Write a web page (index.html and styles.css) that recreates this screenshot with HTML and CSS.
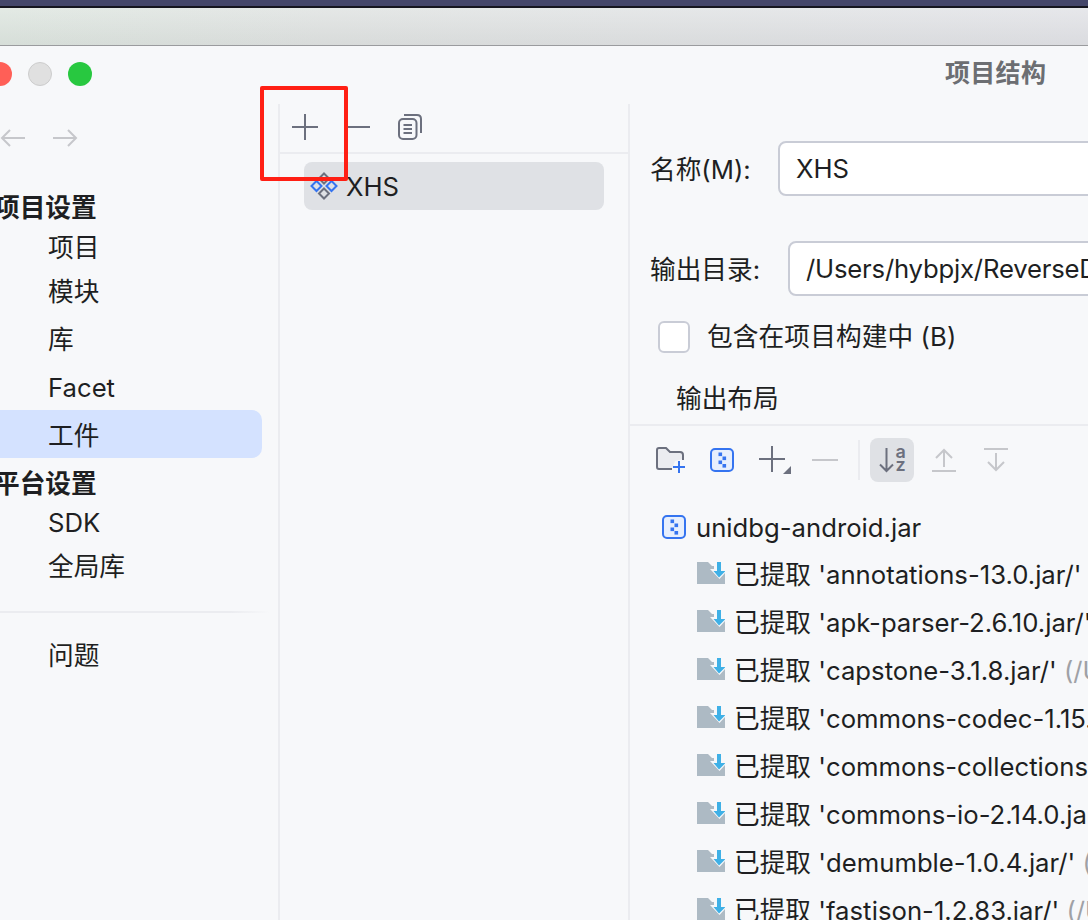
FILE: index.html
```html
<!DOCTYPE html>
<html lang="zh">
<head>
<meta charset="utf-8">
<title>项目结构</title>
<link rel="stylesheet" href="styles.css">
</head>
<body>
<svg class="defs" width="0" height="0" aria-hidden="true">
  <symbol id="jar" viewBox="0 0 24 24">
    <rect x="1" y="1" width="22" height="22" rx="4" fill="#e7effd" stroke="#3574f0" stroke-width="2"/>
    <rect x="8.500" y="4.500" width="3.600" height="3.600" fill="#3574f0"/>
    <rect x="12.500" y="8.500" width="3.600" height="3.600" fill="#3574f0"/>
    <rect x="8.500" y="12.500" width="3.600" height="3.600" fill="#3574f0"/>
    <rect x="12.500" y="16" width="3.600" height="3.600" fill="#3574f0"/>
  </symbol>
  <symbol id="extracted" viewBox="0 0 28 22">
    <path d="M0 0H11L15 4H28V22H0Z" fill="#adbac4"/>
    <path d="M13 7L22.500 17L28 11V0H17V7Z" fill="#f7f8fa"/>
    <path d="M20 0H24V9H28V9.500L22 15.500L16.500 9H20Z" fill="#3fb0e6"/>
  </symbol>
</svg>
<div class="desktop-bar"></div>
<div class="backdrop"></div>
<div class="window">
  <header class="titlebar">
    <div class="lights">
      <span class="light red"></span>
      <span class="light grey"></span>
      <span class="light green"></span>
    </div>
    <h1 class="title">项目结构</h1>
  </header>
  <div class="main">
    <aside class="sidebar">
      <div class="nav-arrows">
        <svg width="26" height="24" viewBox="0 0 26 24"><path d="M25 12H2M10 4L2 12L10 20" fill="none" stroke="#c6c7cb" stroke-width="2"/></svg>
        <svg width="26" height="24" viewBox="0 0 26 24"><path d="M1 12H24M16 4L24 12L16 20" fill="none" stroke="#c6c7cb" stroke-width="2"/></svg>
      </div>
      <div class="nav-head">项目设置</div>
      <div class="nav-item first">项目</div>
      <div class="nav-item">模块</div>
      <div class="nav-item">库</div>
      <div class="nav-item">Facet</div>
      <div class="nav-item active">工件</div>
      <div class="nav-head second">平台设置</div>
      <div class="nav-item first">SDK</div>
      <div class="nav-item">全局库</div>
      <div class="nav-sep"></div>
      <div class="nav-item">问题</div>
    </aside>
    <section class="list-pane">
      <div class="list-toolbar">
        <svg width="28" height="28" viewBox="0 0 28 28"><path d="M14 1V27M1 14H27" stroke="#6c707e" stroke-width="2"/></svg>
        <svg width="26" height="28" viewBox="0 0 26 28"><path d="M1 14H25" stroke="#6c707e" stroke-width="2"/></svg>
        <svg class="copy-icon" width="24" height="26" viewBox="0 0 24 26"><rect x="1" y="5" width="17.500" height="20" rx="4" fill="none" stroke="#6c707e" stroke-width="2"/><path d="M6 1H19Q23 1 23 5V19" fill="none" stroke="#6c707e" stroke-width="2"/><path d="M5.500 11H14M5.500 15H14M5.500 19H14" stroke="#6c707e" stroke-width="2"/></svg>
      </div>
      <div class="artifact-row">
        <svg width="28" height="28" viewBox="0 0 28 28" fill="none" stroke-width="2">
          <path d="M14 1.500L19 6.500L14 11.500L9 6.500Z" stroke="#6c707e"/>
          <path d="M14 16.500L19 21.500L14 26.500L9 21.500Z" stroke="#6c707e"/>
          <path d="M6.500 9L11.500 14L6.500 19L1.500 14Z" stroke="#3574f0"/>
          <path d="M21.500 9L26.500 14L21.500 19L16.500 14Z" stroke="#3574f0"/>
        </svg>
        <span>XHS</span>
      </div>
    </section>
    <section class="detail-pane">
      <div class="field name-field">
        <label class="field-label">名称(M):</label>
        <div class="text-box">XHS</div>
      </div>
      <div class="field dir-field">
        <label class="field-label">输出目录:</label>
        <div class="text-box path-box">/Users/hybpjx/ReverseDemo/out/artifacts/XHS</div>
      </div>
      <div class="check-row">
        <span class="checkbox"></span>
        <span class="check-label">包含在项目构建中 (B)</span>
      </div>
      <div class="layout-title">输出布局</div>
      <div class="layout-toolbar">
        <svg class="t-folder" width="30" height="26" viewBox="0 0 30 26"><path d="M1 20V3Q1 1 3 1H10L14 5H24Q27 5 27 8V12L19 14L16 22H3Q1 22 1 20Z" fill="#ebecf0"/><path d="M16 22H3Q1 22 1 20V3Q1 1 3 1H10L14 5H24Q27 5 27 8V13" fill="none" stroke="#6c707e" stroke-width="2"/><path d="M23 14V26M17 20H29" stroke="#3574f0" stroke-width="2"/></svg>
        <svg class="t-jar" width="24" height="24"><use href="#jar"/></svg>
        <svg class="t-plus" width="34" height="30" viewBox="0 0 34 30"><path d="M13 1V27M0 14H26" stroke="#6c707e" stroke-width="2"/><path d="M32 21V29H24Z" fill="#6c707e"/></svg>
        <svg class="t-minus" width="26" height="28" viewBox="0 0 26 28"><path d="M0 14H26" stroke="#c6c7cb" stroke-width="2"/></svg>
        <span class="t-sep"></span>
        <span class="t-sort">
          <svg width="32" height="30" viewBox="0 0 32 30"><path d="M10.500 3V26M4 19.500L10.500 26L17 19.500" fill="none" stroke="#6c707e" stroke-width="2"/><text class="sort-letter" x="19.500" y="13">a</text><text class="sort-letter" x="19.500" y="26">z</text></svg>
        </span>
        <svg class="t-up" width="24" height="24" viewBox="0 0 24 24"><path d="M12 19V2M4 10L12 2L20 10M0 23H24" fill="none" stroke="#c6c7cb" stroke-width="2"/></svg>
        <svg class="t-down" width="24" height="24" viewBox="0 0 24 24"><path d="M0 1H24M12 5V22M4 14L12 22L20 14" fill="none" stroke="#c6c7cb" stroke-width="2"/></svg>
      </div>
      <div class="tree">
        <div class="tree-root"><svg width="24" height="24"><use href="#jar"/></svg><span>unidbg-android.jar</span></div>
        <div class="tree-row"><svg width="28" height="22"><use href="#extracted"/></svg><span>已提取 'annotations-13.0.jar/' <em>(/Users/hybpjx/.m2)</em></span></div>
        <div class="tree-row"><svg width="28" height="22"><use href="#extracted"/></svg><span>已提取 'apk-parser-2.6.10.jar/' <em>(/Users/hybpjx/.m2)</em></span></div>
        <div class="tree-row"><svg width="28" height="22"><use href="#extracted"/></svg><span>已提取 'capstone-3.1.8.jar/' <em>(/Users/hybpjx/.m2)</em></span></div>
        <div class="tree-row"><svg width="28" height="22"><use href="#extracted"/></svg><span>已提取 'commons-codec-1.15.jar/' <em>(/Users)</em></span></div>
        <div class="tree-row"><svg width="28" height="22"><use href="#extracted"/></svg><span>已提取 'commons-collections-3.2.2.jar/'</span></div>
        <div class="tree-row"><svg width="28" height="22"><use href="#extracted"/></svg><span>已提取 'commons-io-2.14.0.jar/' <em>(/Users)</em></span></div>
        <div class="tree-row"><svg width="28" height="22"><use href="#extracted"/></svg><span>已提取 'demumble-1.0.4.jar/' <em>(/Users/hybpjx)</em></span></div>
        <div class="tree-row"><svg width="28" height="22"><use href="#extracted"/></svg><span>已提取 'fastjson-1.2.83.jar/' <em>(/Users/hybpjx)</em></span></div>
      </div>
    </section>
  </div>
</div>
<div class="callout"></div>
</body>
</html>
```
FILE: styles.css
```css
* { box-sizing: border-box; }
html, body { margin: 0; height: 100%; }
body {
  position: relative;
  width: 1088px;
  height: 920px;
  overflow: hidden;
  display: flex;
  flex-direction: column;
  background: #f7f8fa;
  color: #1e1f22;
  font-family: Inter, "Noto Sans CJK SC", sans-serif;
  font-size: 25.700px;
}
.defs { position: absolute; }
.desktop-bar {
  height: 8px;
  flex: none;
  background: #44466a;
  border-bottom: 2px solid #15151f;
}
.backdrop {
  height: 38px;
  flex: none;
  background:
    linear-gradient(180deg, rgba(255, 255, 255, 0.12), rgba(0, 0, 0, 0.04)),
    linear-gradient(90deg, #dfe7e1 0%, #e1e4e3 30%, #e3e4e8 100%);
  border-bottom: 1px solid #9a9b9e;
}
.window { flex: 1; min-height: 0; display: flex; flex-direction: column; }
.titlebar { height: 58px; flex: none; display: flex; align-items: center; padding-bottom: 2px; }
.lights { display: flex; gap: 16px; margin-left: -12px; }
.light { width: 24px; height: 24px; border-radius: 50%; }
.red { background: #ff5f57; }
.grey { background: #e0e0e0; border: 1px solid #cdcdcd; }
.green { background: #28c840; }
.title {
  margin: 0 0 6px 853px;
  font-size: 25px;
  font-weight: 700;
  letter-spacing: 0.3px;
  color: #6c6e72;
  white-space: nowrap;
}
.main { flex: 1; min-height: 0; display: flex; }
.sidebar { width: 280px; flex: none; border-right: 2px solid #ebecf0; }
.nav-arrows { height: 83px; padding: 22px 0 0 0; display: flex; gap: 26px; align-items: flex-start; }
.nav-head { height: 40px; line-height: 40px; padding-top: 1px; font-weight: 700; margin-left: -6px; white-space: nowrap; }
.nav-head.second { margin-top: 4px; padding-top: 2px; }
.nav-item { height: 48px; line-height: 48px; width: 262px; padding: 1px 0 0 48px; border-radius: 0 10px 10px 0; }
.nav-item.first { height: 40px; line-height: 40px; }
.nav-item.active { background: #d4e2ff; margin-top: -1px; margin-bottom: 1px; padding-top: 2px; }
.nav-sep { height: 2px; width: 270px; margin: 21px 0 18px; background: linear-gradient(90deg, #ebecf0 85%, #f7f8fa); }
.list-pane { width: 350px; flex: none; border-right: 2px solid #ebecf0; }
.list-toolbar { height: 50px; display: flex; align-items: center; padding: 0 0 2px 11px; gap: 26px; border-bottom: 2px solid #ebecf0; }
.list-toolbar .copy-icon { margin-left: 1px; }
.artifact-row {
  margin: 8px 24px 0;
  height: 48px;
  padding-left: 6px;
  display: flex;
  align-items: center;
  gap: 8px;
  background: #dfe1e5;
  border-radius: 8px;
}
.detail-pane { flex: 1; min-width: 0; overflow: hidden; }
.field { display: flex; align-items: center; white-space: nowrap; }
.name-field { margin: 37px 0 0 20px; }
.dir-field { margin: 45px 0 0 20px; }
.field-label { flex: none; padding-bottom: 2px; }
.name-field .field-label { width: 128px; }
.dir-field .field-label { width: 138px; }
.text-box {
  flex: none;
  width: 600px;
  height: 55px;
  line-height: 52px;
  padding-left: 16px;
  background: #fff;
  border: 2px solid #c9ccd6;
  border-radius: 8px;
}
.path-box { letter-spacing: -0.2px; }
.check-row { margin: 25px 0 0 28px; display: flex; align-items: center; gap: 17px; white-space: nowrap; height: 32px; }
.checkbox { width: 32px; height: 32px; background: #fff; border: 2px solid #c9ccd6; border-radius: 6px; }
.check-label { padding-bottom: 6px; letter-spacing: 0.1px; }
.layout-title { margin: 25px 0 0 46px; height: 46px; line-height: 42px; }
.layout-toolbar {
  height: 70px;
  border-top: 2px solid #ebecf0;
  display: flex;
  align-items: center;
  padding-left: 26px;
}
.t-jar { margin-left: 24px; }
.t-plus { margin-left: 25px; }
.t-minus { margin-left: 19px; }
.t-sep { width: 2px; height: 40px; background: #ebecf0; margin-left: 20px; }
.t-sort { width: 44px; height: 44px; margin-left: 10px; display: flex; align-items: center; justify-content: center; background: #dfe1e5; border-radius: 8px; }
.sort-letter { font-size: 18px; font-weight: 600; fill: #6c707e; font-family: Inter, sans-serif; }
.t-up { margin-left: 18px; }
.t-down { margin-left: 28px; }
.tree { padding-top: 9px; white-space: nowrap; }
.tree-root { height: 48px; display: flex; align-items: center; gap: 10px; padding-left: 32px; }
.tree-row { height: 48px; display: flex; align-items: center; gap: 9px; padding-left: 67px; }
.tree-row svg { flex: none; margin-top: -4px; }
.tree-row span { padding-bottom: 6px; }
.tree em { font-style: normal; color: #9fa1a6; }
.callout {
  position: absolute;
  left: 260px;
  top: 86px;
  width: 88px;
  height: 95px;
  border: 4px solid #ff1f14;
  border-radius: 2px;
}
```
